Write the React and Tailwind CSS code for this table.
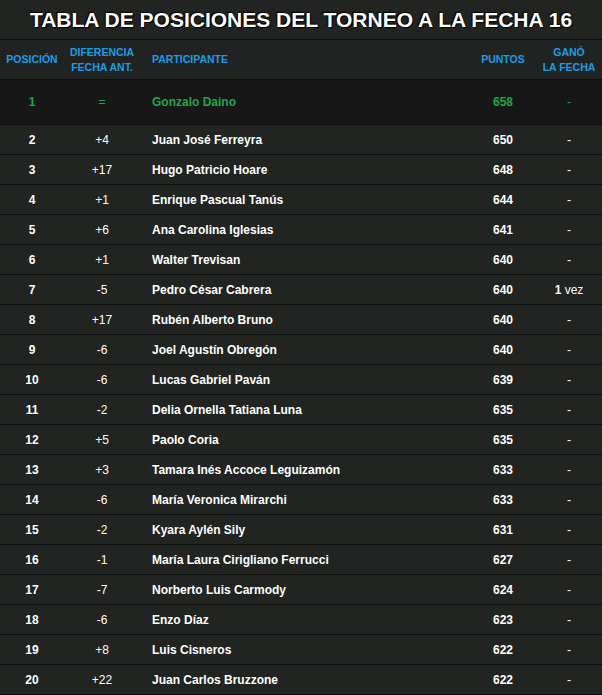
const ROWS = [
  [1, '=', 'Gonzalo Daino', 658, null],
  [2, '+4', 'Juan José Ferreyra', 650, null],
  [3, '+17', 'Hugo Patricio Hoare', 648, null],
  [4, '+1', 'Enrique Pascual Tanús', 644, null],
  [5, '+6', 'Ana Carolina Iglesias', 641, null],
  [6, '+1', 'Walter Trevisan', 640, null],
  [7, '-5', 'Pedro César Cabrera', 640, 1],
  [8, '+17', 'Rubén Alberto Bruno', 640, null],
  [9, '-6', 'Joel Agustín Obregón', 640, null],
  [10, '-6', 'Lucas Gabriel Paván', 639, null],
  [11, '-2', 'Delia Ornella Tatiana Luna', 635, null],
  [12, '+5', 'Paolo Coria', 635, null],
  [13, '+3', 'Tamara Inés Accoce Leguizamón', 633, null],
  [14, '-6', 'María Veronica Mirarchi', 633, null],
  [15, '-2', 'Kyara Aylén Sily', 631, null],
  [16, '-1', 'María Laura Cirigliano Ferrucci', 627, null],
  [17, '-7', 'Norberto Luis Carmody', 624, null],
  [18, '-6', 'Enzo Díaz', 623, null],
  [19, '+8', 'Luis Cisneros', 622, null],
  [20, '+22', 'Juan Carlos Bruzzone', 622, null],
]

function Row({ pos, diff, name, pts, won }) {
  const leader = pos === 1
  return (
    <div
      className={`flex items-center border-b border-[#0d0e0e] ${
        leader ? 'h-[45px] bg-[#161716] text-[#1fa64a]' : 'h-[30px] bg-[#212421] text-white'
      }`}
    >
      <div className="w-[64px] text-center font-bold">{pos}</div>
      <div className="w-[76px] text-center">{diff}</div>
      <div className="flex-1 pl-3 font-bold">{name}</div>
      <div className="w-[66px] text-center font-bold">{pts}</div>
      <div className="w-[66px] text-center">
        {won ? (
          <>
            <span className="font-bold">{won}</span> vez
          </>
        ) : (
          '-'
        )}
      </div>
    </div>
  )
}

export default function App() {
  return (
    <div className="w-[602px] h-[695px] overflow-hidden bg-[#212421] font-['Liberation_Sans',Arial,sans-serif] text-[12px]">
      <div className="h-[40px] flex items-center justify-center border-b border-[#0d0e0e] bg-[#222422]">
        <h1 className="text-white font-bold text-[21px] leading-none [text-shadow:1px_1px_1px_#000,-1px_-1px_1px_#000]">
          TABLA DE POSICIONES DEL TORNEO A LA FECHA 16
        </h1>
      </div>
      <div className="h-[40px] flex items-center border-b border-[#0d0e0e] bg-[#202321] text-[#1b9de6] font-bold text-[10.5px] leading-[15px]">
        <div className="w-[64px] text-center">POSICIÓN</div>
        <div className="w-[76px] text-center">
          DIFERENCIA
          <br />
          FECHA ANT.
        </div>
        <div className="flex-1 pl-3">PARTICIPANTE</div>
        <div className="w-[66px] text-center">PUNTOS</div>
        <div className="w-[66px] text-center">
          GANÓ
          <br />
          LA FECHA
        </div>
      </div>
      {ROWS.map(([pos, diff, name, pts, won]) => (
        <Row key={pos} pos={pos} diff={diff} name={name} pts={pts} won={won} />
      ))}
    </div>
  )
}
